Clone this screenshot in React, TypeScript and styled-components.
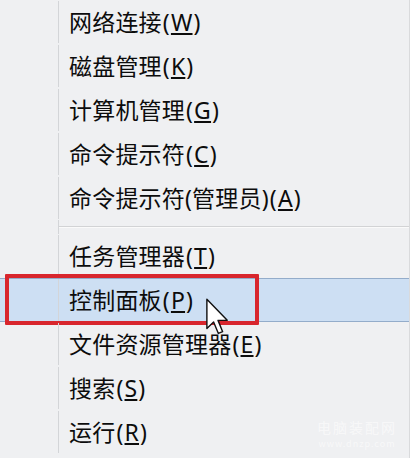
import styled, { createGlobalStyle } from "styled-components";

const GlobalStyle = createGlobalStyle`
    html, body {
        margin: 0;
        padding: 0;
        background: #eff0f2;
    }
    body {
        font-family: "Noto Sans", "Noto Sans CJK SC", sans-serif;
    }
`;

interface MenuEntry {
    label: string;
    extra?: string;
    hotkey: string;
    active?: boolean;
}

const topItems: MenuEntry[] = [
    { label: "网络连接", hotkey: "W" },
    { label: "磁盘管理", hotkey: "K" },
    { label: "计算机管理", hotkey: "G" },
    { label: "命令提示符", hotkey: "C" },
    { label: "命令提示符", extra: "(管理员)", hotkey: "A" },
];

const bottomItems: MenuEntry[] = [
    { label: "任务管理器", hotkey: "T" },
    { label: "控制面板", hotkey: "P", active: true },
    { label: "文件资源管理器", hotkey: "E" },
    { label: "搜索", hotkey: "S" },
    { label: "运行", hotkey: "R" },
];

const Item = ({ label, extra, hotkey, active }: MenuEntry) => {
    return (
        <Row $active={!!active}>
            <Gutter />
            <Label>
                {label}
                {extra}
                <Paren>(</Paren>
                <Key>{hotkey}</Key>
                <Paren>)</Paren>
            </Label>
            {active && (
                <>
                    <Mark />
                    <Cursor width="23" height="38" viewBox="0 0 13 21">
                        <path
                            d="M0.5 0.5 L0.5 17 L4.3 13.3 L7 19.8 L9.4 18.8 L6.8 12.4 L12 12.4 Z"
                            fill="#fff"
                            stroke="#111"
                            strokeWidth="0.8"
                            strokeLinejoin="round"
                        />
                    </Cursor>
                </>
            )}
        </Row>
    );
};

export default function App() {
    return (
        <>
            <GlobalStyle />
            <Menu>
                {topItems.map((it, i) => (
                    <Item key={"t" + i} {...it} />
                ))}
                <SepRow>
                    <Gutter />
                    <SepLine />
                </SepRow>
                {bottomItems.map((it, i) => (
                    <Item key={"b" + i} {...it} />
                ))}
                <Watermark>
                    <span>电脑装配网</span>
                    <small>www.dnzp.com</small>
                </Watermark>
            </Menu>
        </>
    );
}

const Menu = styled.div`
    position: relative;
    width: 410px;
    height: 458px;
    box-sizing: border-box;
    border-right: 1px solid #d9dadc;
    background: #eff0f2;
    overflow: hidden;
`;

const Row = styled.div<{ $active: boolean }>`
    position: relative;
    display: flex;
    align-items: center;
    height: 44px;
    box-sizing: border-box;
    background: ${(p) => (p.$active ? "#cddff3" : "transparent")};
    border-top: 1px solid ${(p) => (p.$active ? "#93acca" : "transparent")};
    border-bottom: 1px solid ${(p) => (p.$active ? "#93acca" : "transparent")};
`;

const Gutter = styled.div`
    width: 58px;
    align-self: stretch;
    flex: none;
    border-right: 1px solid #d3d5d8;
`;

const Label = styled.div`
    padding-left: 10px;
    font-size: 23px;
    line-height: 1;
    color: #0c0c0c;
    white-space: nowrap;
    letter-spacing: 0.2px;
`;

const Paren = styled.span`
    margin: 0 1px;
`;

const Key = styled.span`
    text-decoration: underline;
    text-decoration-thickness: 1.5px;
    text-underline-offset: 2px;
`;

const SepRow = styled.div`
    display: flex;
    align-items: center;
    height: 14px;
`;

const SepLine = styled.div`
    flex: 1;
    height: 1px;
    background: #d2d3d5;
    border-bottom: 1px solid #fafafa;
`;

const Mark = styled.div`
    position: absolute;
    left: 5px;
    top: -5px;
    width: 254px;
    height: 51px;
    box-sizing: border-box;
    border: 4px solid #d8262d;
    border-radius: 1px;
    pointer-events: none;
`;

const Cursor = styled.svg`
    position: absolute;
    left: 206px;
    top: 19px;
    pointer-events: none;
`;

const Watermark = styled.div`
    position: absolute;
    right: 12px;
    bottom: 8px;
    display: flex;
    flex-direction: column;
    align-items: center;
    color: rgba(255, 255, 255, 0.55);
    font-family: "Noto Sans CJK SC", sans-serif;
    span {
        font-size: 14px;
        letter-spacing: 2px;
    }
    small {
        font-size: 9px;
        letter-spacing: 1px;
    }
`;
